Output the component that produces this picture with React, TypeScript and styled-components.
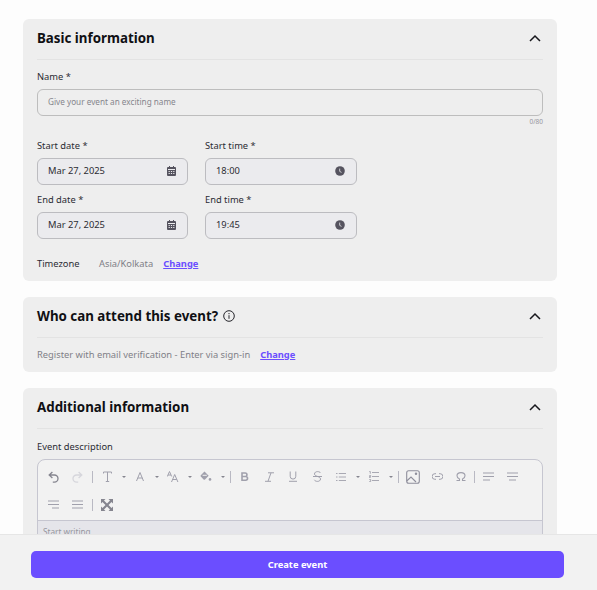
import React from "react";
import styled, { createGlobalStyle } from "styled-components";

const Global = createGlobalStyle`
  html, body { margin: 0; padding: 0; height: 100%; overflow: hidden; background: #fdfdfd; }
  body { font-family: "Noto Sans", "Open Sans", sans-serif; color: #1c1c21; }
  * { box-sizing: border-box; }
`;

const Page = styled.main`
  display: flex;
  flex-direction: column;
  gap: 16px;
  width: 534px;
  margin-left: 23px;
  padding-top: 19px;
`;

const Card = styled.section`
  background: #eeeeee;
  border-radius: 6px;
  padding: 0 14px 10px;
`;

const CardHeader = styled.header`
  display: flex;
  align-items: center;
  justify-content: space-between;
  height: 41px;
  padding-bottom: 2px;
  border-bottom: 1px solid #e3e3e3;
  padding-right: 2px;
`;

const Title = styled.h2`
  display: flex;
  align-items: center;
  gap: 5px;
  margin: 0;
  font-size: 13.33px;
  line-height: 20px;
  font-weight: 700;
  color: #101014;
`;

const Label = styled.label`
  display: block;
  font-size: 9.33px;
  line-height: 14px;
  color: #2b2b33;
  margin-bottom: 5px;
`;

const NameBlock = styled.div`
  padding-top: 10px;
`;

const EditorBlock = styled.div`
  padding-top: 11px;
`;

const TextField = styled.div`
  display: flex;
  align-items: center;
  height: 26.67px;
  padding: 0 10px 1px;
  border: 1px solid #bdbdbd;
  border-radius: 6px;
  font-size: 8.2px;
  color: #85858c;
`;

const Counter = styled.div`
  text-align: right;
  font-size: 6.5px;
  line-height: 8px;
  margin-top: 2px;
  color: #96969e;
`;

const DateGrid = styled.div`
  display: grid;
  grid-template-columns: 151px 152px;
  column-gap: 17px;
  row-gap: 8.33px;
  margin-top: 13.33px;
`;

const PickerField = styled.div`
  display: flex;
  align-items: center;
  justify-content: space-between;
  height: 26.67px;
  padding: 0 11px 1px 10px;
  background: #ebebee;
  border: 1px solid #bcbcc0;
  border-radius: 6px;
  font-size: 9.33px;
  color: #2b2b33;
`;

const Row = styled.div<{ $top: number }>`
  display: flex;
  align-items: center;
  margin-top: ${(p) => p.$top}px;
  font-size: 9.33px;
  line-height: 14px;
`;

const RowLabel = styled.span`
  width: 62px;
  color: #2b2b33;
`;

const Muted = styled.span<{ $gap: number }>`
  color: #7f7f87;
  margin-right: ${(p) => p.$gap}px;
`;

const ChangeLink = styled.a`
  color: #6b4eff;
  font-weight: 700;
  text-decoration: underline;
`;

const Editor = styled.div`
  border: 1px solid #c6c6d0;
  border-radius: 8px 8px 0 0;
  background: #f2f2f2;
`;

const Toolbar = styled.div`
  padding: 3px 3px 1px;
  border-bottom: 1px solid #c6c6d0;
`;

const ToolRow = styled.div`
  display: flex;
  align-items: center;
  height: 28px;
`;

const Tool = styled.span<{ $tone?: "off" | "dark" }>`
  display: flex;
  align-items: center;
  justify-content: center;
  width: 24px;
  height: 24px;
  flex: none;
  color: ${(p) => (p.$tone === "off" ? "#d6d6dc" : p.$tone === "dark" ? "#85858f" : "#a0a0ac")};
`;

const Caret = styled.span`
  width: 9px;
  flex: none;
  display: flex;
  justify-content: center;
  &::before {
    content: "";
    border-left: 2px solid transparent;
    border-right: 2px solid transparent;
    border-top: 2px solid #85858f;
  }
`;

const Sep = styled.span<{ $tight?: boolean }>`
  width: 1px;
  height: 12px;
  flex: none;
  background: #b9b9c3;
  margin: ${(p) => (p.$tight ? "0 1px" : "0 2px 0 3px")};
`;

const EditorBody = styled.div`
  height: 120px;
  background: #e5e5ea;
  padding: 5px 5px;
  font-size: 8.2px;
  color: #96969e;
`;

const Footer = styled.footer`
  position: fixed;
  left: 0;
  right: 0;
  bottom: 0;
  height: 56px;
  background: #f2f2f2;
  border-top: 1px solid #e6e6e6;
  padding: 16px 33px 0 31px;
`;

const Submit = styled.button`
  display: block;
  width: 100%;
  height: 27px;
  border: 0;
  border-radius: 5px;
  background: #6b4eff;
  color: #ffffff;
  font-family: inherit;
  font-size: 9.33px;
  font-weight: 700;
`;

const S = { fill: "none", stroke: "currentColor", strokeWidth: 1 } as const;

const Chevron = () => (
  <svg width="12" height="8" viewBox="0 0 12 8" fill="none" stroke="#17171c" strokeWidth="1.5">
    <path d="M1 7l5-5 5 5" />
  </svg>
);
const Calendar = () => (
  <svg width="9" height="10" viewBox="0 0 9 10" fill="#55535f">
    <path d="M1 1h1V0h1v1h3V0h1v1h1a1 1 0 0 1 1 1v7a1 1 0 0 1-1 1H1a1 1 0 0 1-1-1V2a1 1 0 0 1 1-1zM1 4h7V3H1zM1.600 5v1h1.200V5zm2.300 0v1h1.200V5zm2.300 0v1h1.200V5zM1.600 7v1h1.200V7zm2.300 0v1h1.200V7zm2.300 0v1h1.200V7z" fillRule="evenodd" />
  </svg>
);
const Clock = () => (
  <svg width="10" height="10" viewBox="0 0 10 10">
    <circle cx="5" cy="5" r="4.800" fill="#55535f" />
    <path d="M4.700 2.600v2.800l1.800 1" fill="none" stroke="#ebebee" strokeWidth=".8" />
  </svg>
);
const Info = () => (
  <svg width="12" height="12" viewBox="0 0 12 12" fill="none" stroke="#26262c" strokeWidth="1">
    <circle cx="6" cy="6" r="5.300" />
    <path d="M6 5.200v3.600M6 3v1.200" />
  </svg>
);

const icons: Record<string, React.ReactNode> = {
  undo: <svg width="11" height="12" viewBox="0 0 11 12" fill="none" stroke="currentColor" strokeWidth="1.300"><path d="M4.400 1L1.200 4l3.200 3M1.400 4h5a3.500 3.500 0 0 1 0 7.200H4.800" /></svg>,
  redo: <svg width="11" height="12" viewBox="0 0 11 12" fill="none" stroke="currentColor" strokeWidth="1.300"><path d="M6.600 1l3.200 3-3.200 3M9.600 4h-5a3.500 3.500 0 0 0 0 7.200h1.600" /></svg>,
  text: <svg width="9" height="11" viewBox="0 0 9 11" {...S}><path d="M.5 2.500V1h8v1.500M4.500 1v9.500M2.800 10.500h3.400" /></svg>,
  color: <svg width="8" height="9" viewBox="0 0 8 9" {...S}><path d="M.5 9L4 .5 7.500 9M1.700 6h4.600" /></svg>,
  size: <svg width="12" height="11" viewBox="0 0 12 11" fill="none" stroke="currentColor" strokeWidth="1"><path d="M.3 5.500L2.500.5l2.200 5M1 4h3M4.500 11l3.200-7.500 3.200 7.500M5.600 8.500h4.200" /></svg>,
  fill: <svg width="12" height="11" viewBox="0 0 12 11"><path d="M4.500.5l4.200 4.200-3.700 3.700a1 1 0 0 1-1.400 0L.8 5.600a1 1 0 0 1 0-1.400L4.200 .8z" fill="currentColor" /><path d="M2.600 4.300h4.200" stroke="#f2f2f2" strokeWidth="1" /><circle cx="10" cy="8.400" r="1.300" fill="currentColor" /></svg>,
  bold: <svg width="8" height="9" viewBox="0 0 8 9" fill="none" stroke="currentColor" strokeWidth="1.600"><path d="M1 1h3.200a1.750 1.750 0 0 1 0 3.500H1zM1 4.500h3.700a1.750 1.750 0 0 1 0 3.700H1z" /></svg>,
  italic: <svg width="9" height="10" viewBox="0 0 9 10" {...S}><path d="M3 .8h6M0 9.300h6M6 .8L3 9.300" /></svg>,
  underline: <svg width="8" height="11" viewBox="0 0 8 11" {...S}><path d="M1.200 .5v4.800a2.800 2.800 0 0 0 5.600 0V.5M0 10.300h8" /></svg>,
  strike: <svg width="9" height="11" viewBox="0 0 9 11" {...S}><path d="M7.500 2C7 1 5.800.6 4.500.6 3 .6 1.500 1.400 1.500 3c0 2.500 6 2.300 6 5 0 1.500-1.400 2.400-3 2.400-1.400 0-2.600-.5-3.200-1.600M0 5.500h9" /></svg>,
  ul: <svg width="10" height="10" viewBox="0 0 10 10" fill="none" stroke="currentColor" strokeWidth=".9"><path d="M2.800 1.500H10M2.800 5H10M2.800 8.500H10M0 1.500h1.500M0 5h1.500M0 8.500h1.500" /></svg>,
  ol: <svg width="10" height="11" viewBox="0 0 10 11" fill="none" stroke="currentColor" strokeWidth=".9"><path d="M3 1.500h7M3 5.500h7M3 9.500h7M.3 .5h1v2.200M.3 4.500h1.400v1H.3v1h1.400M.3 8.500h1.400v2H.3" /></svg>,
  image: <svg width="14" height="14" viewBox="0 0 14 14" fill="none" stroke="#8f8f9c" strokeWidth="1.100"><rect x=".7" y=".7" width="12.600" height="12.600" rx="2" /><path d="M.7 11L5 7l5 5" /><circle cx="10" cy="3.800" r=".7" /></svg>,
  link: <svg width="11" height="7" viewBox="0 0 11 7" {...S}><path d="M4 .7H2.900a2.800 2.800 0 0 0 0 5.600H4M7 .7h1.100a2.800 2.800 0 0 1 0 5.600H7M3 3.500h5" /></svg>,
  omega: <svg width="10" height="9" viewBox="0 0 10 9" fill="none" stroke="currentColor" strokeWidth="1.100"><path d="M.5 8.500h3V7C2 6.400 1 5.300 1 3.800 1 1.900 2.800.6 5 .6s4 1.300 4 3.200C9 5.300 8 6.400 6.500 7v1.500h3" /></svg>,
  left: <svg width="11" height="9" viewBox="0 0 11 9" {...S}><path d="M0 1h11M0 4.500h11M0 8h7" /></svg>,
  center: <svg width="11" height="9" viewBox="0 0 11 9" {...S}><path d="M0 1h11M0 4.500h11M2 8h7" /></svg>,
  right: <svg width="11" height="9" viewBox="0 0 11 9" {...S}><path d="M0 1h11M0 4.500h11M4 8h7" /></svg>,
  justify: <svg width="11" height="9" viewBox="0 0 11 9" {...S}><path d="M0 1h11M0 4.500h11M0 8h11" /></svg>,
  full: <svg width="12" height="12" viewBox="0 0 12 12" fill="currentColor"><path d="M0 0h4.500L3 1.500l3 3 3-3L7.500 0H12v4.500L10.500 3l-3 3 3 3L12 7.500V12H7.500L9 10.500l-3-3-3 3L4.500 12H0V7.500L1.500 9l3-3-3-3L0 4.500z" /></svg>,
};

const T = ({ n, tone }: { n: string; tone?: "off" | "dark" }) => <Tool $tone={tone}>{icons[n]}</Tool>;

export default function App() {
  return (
    <>
      <Global />
      <Page>
        <Card>
          <CardHeader>
            <Title>Basic information</Title>
            <Chevron />
          </CardHeader>
          <NameBlock>
            <Label>Name *</Label>
            <TextField>Give your event an exciting name</TextField>
            <Counter>0/80</Counter>
          </NameBlock>
          <DateGrid>
            <div>
              <Label>Start date *</Label>
              <PickerField>Mar 27, 2025<Calendar /></PickerField>
            </div>
            <div>
              <Label>Start time *</Label>
              <PickerField>18:00<Clock /></PickerField>
            </div>
            <div>
              <Label>End date *</Label>
              <PickerField>Mar 27, 2025<Calendar /></PickerField>
            </div>
            <div>
              <Label>End time *</Label>
              <PickerField>19:45<Clock /></PickerField>
            </div>
          </DateGrid>
          <Row $top={18}>
            <RowLabel>Timezone</RowLabel>
            <Muted $gap={10}>Asia/Kolkata</Muted>
            <ChangeLink>Change</ChangeLink>
          </Row>
        </Card>
        <Card>
          <CardHeader>
            <Title>Who can attend this event? <Info /></Title>
            <Chevron />
          </CardHeader>
          <Row $top={10}>
            <Muted $gap={10}>Register with email verification - Enter via sign-in</Muted>
            <ChangeLink>Change</ChangeLink>
          </Row>
        </Card>
        <Card>
          <CardHeader>
            <Title>Additional information</Title>
            <Chevron />
          </CardHeader>
          <EditorBlock>
            <Label>Event description</Label>
            <Editor>
              <Toolbar>
                <ToolRow>
                  <T n="undo" tone="dark" /><T n="redo" tone="off" /><Sep />
                  <T n="text" /><Caret />
                  <T n="color" /><Caret />
                  <T n="size" /><Caret />
                  <T n="fill" /><Caret /><Sep />
                  <T n="bold" /><T n="italic" /><T n="underline" /><T n="strike" />
                  <T n="ul" /><Caret />
                  <T n="ol" /><Caret /><Sep />
                  <T n="image" /><T n="link" /><T n="omega" /><Sep $tight />
                  <T n="left" /><T n="center" />
                </ToolRow>
                <ToolRow>
                  <T n="right" /><T n="justify" /><Sep />
                  <T n="full" tone="dark" />
                </ToolRow>
              </Toolbar>
              <EditorBody>Start writing</EditorBody>
            </Editor>
          </EditorBlock>
        </Card>
      </Page>
      <Footer>
        <Submit>Create event</Submit>
      </Footer>
    </>
  );
}
